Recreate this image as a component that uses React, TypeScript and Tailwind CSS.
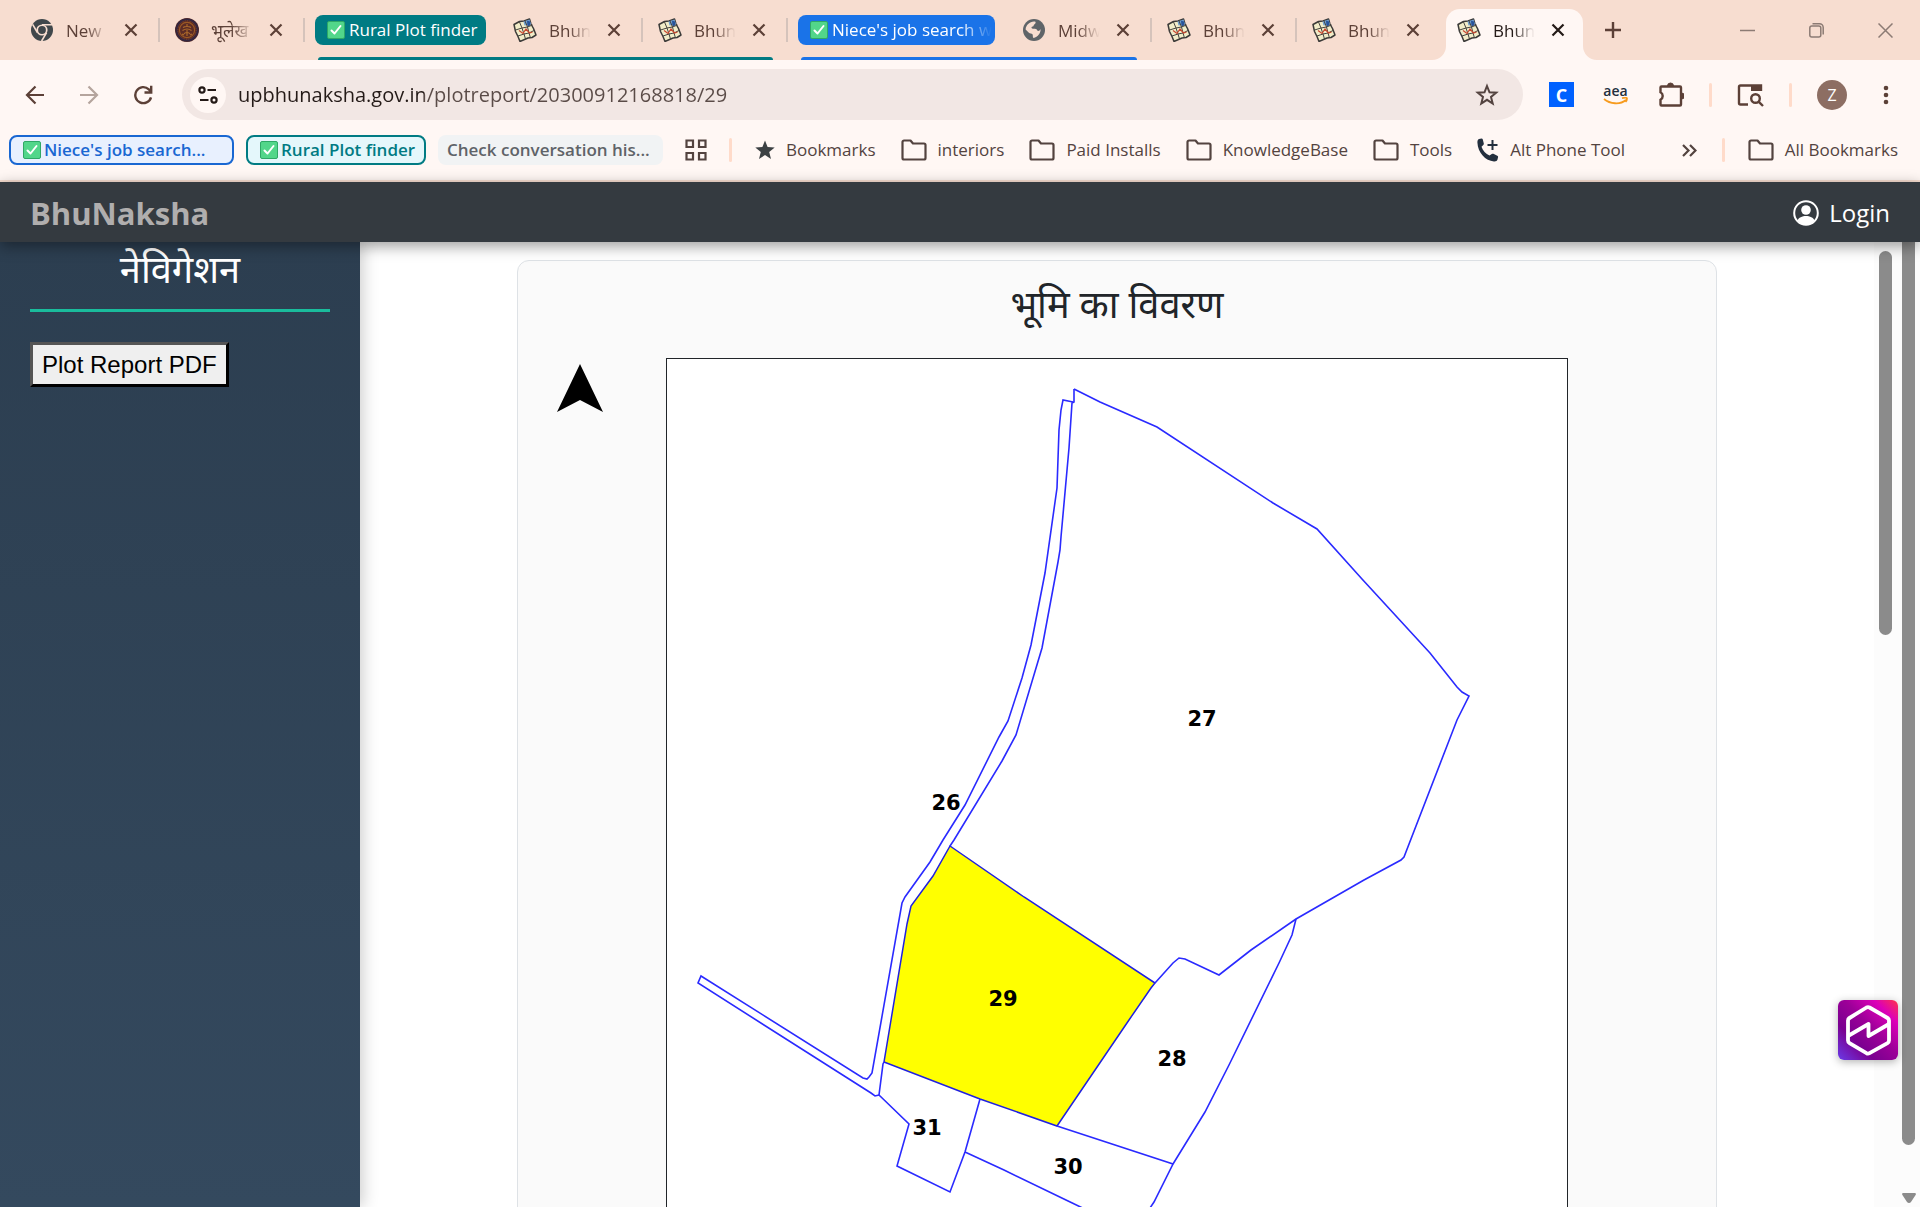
import { ReactNode } from 'react'
import clsx from 'clsx'

const ui = "font-['Open_Sans','Noto_Sans',sans-serif]"

/* ---------- icons ---------- */

const ChromeIcon = () => (
  <svg viewBox="0 0 24 24" className="h-6 w-6 shrink-0">
    <circle cx="12" cy="12" r="11" fill="#40474b" />
    <circle cx="12" cy="12" r="5.6" fill="#f7ddd0" />
    <circle cx="12" cy="12" r="3.9" fill="#40474b" />
    <path d="M12 6.8h10M7.4 14.5 2.6 6.4M16.6 14.6 11.6 23" stroke="#f7ddd0" strokeWidth="1.6" fill="none" />
  </svg>
)

const SealIcon = () => (
  <svg viewBox="0 0 24 24" className="h-6 w-6 shrink-0">
    <circle cx="12" cy="12" r="12" fill="#5b2b25" />
    <circle cx="12" cy="12" r="10.6" fill="none" stroke="#332640" strokeWidth="1.8" />
    <circle cx="12" cy="12" r="7.6" fill="none" stroke="#9c5a24" strokeWidth="1.1" />
    <path d="M12 6v3M8 9.5c2-1.4 6-1.4 8 0M7.5 12.5c3-2 6-2 9 0M9 16c1-2 5-2 6 0M12 12v6M7 16l2 1M17 16l-2 1" stroke="#b06c2a" strokeWidth="1.1" fill="none" />
    <circle cx="12" cy="12" r="9.2" fill="none" stroke="#8a4a2a" strokeWidth=".8" strokeDasharray="1 1.4" />
  </svg>
)

const MapIcon = () => (
  <svg viewBox="0 0 24 24" className="h-6 w-6 shrink-0">
    <path d="M1 6.5 6.5 3.5 11 3 16.5 1 18 6l2.5 4.5L23 17l-4 2.5-4 .5-8 3.5-2-5-2.5-5z" fill="#f1ecc8" stroke="#3b3a38" strokeWidth="1.5" strokeLinejoin="round" />
    <path d="m10.5 3.5 6-2 1.5 4.5-3.5 1-3 .5z" fill="#6f9fd0" />
    <path d="m14 2.5 3 1 .5 4-3 1z" fill="#28549a" />
    <path d="m2.5 12 6.5-2 5.5-1 5-2M5 18l6-2 5-1 5-2.5M6.5 4l2.5 6 2 6 1.5 5M12 3l2.5 6 1.5 6 1.5 5" fill="none" stroke="#46443f" strokeWidth="1" />
    <path d="m6 12.5 4 3 3-4.5 3.5 4 3-1" fill="none" stroke="#c9472f" strokeWidth="1.2" />
  </svg>
)

const GlobeIcon = () => (
  <svg viewBox="0 0 24 24" className="h-6 w-6 shrink-0">
    <circle cx="12" cy="12" r="11" fill="#5f6468" />
    <path d="M12 3.6c2.6-.2 1.6 2.2.3 2.8-1 .5-.3 1.8-1.6 2.2-1.3.3-1.8 1.4-.5 1.9 1.6.5 4.3-.2 5 1.7.6 1.7 2.8.4 3.3-1.2.6 3.5-2.6 8.4-7 8.9-1.1-.8-.3-2.6-1-3.7-.9-1.3-2.6-.3-3.6-1.5L3.6 11.4C3.9 7.3 7.5 3.9 12 3.6z" fill="#f7ddd0" />
  </svg>
)

const CheckMark = () => (
  <svg viewBox="0 0 18 18" className="h-[18px] w-[18px] shrink-0">
    <rect x=".5" y=".5" width="17" height="17" rx="1.5" fill="#52d68a" stroke="#2fa866" />
    <path d="m4.5 9.5 3 3 6-7.5" fill="none" stroke="#fff" strokeWidth="2" strokeLinecap="round" strokeLinejoin="round" />
  </svg>
)

const Cross = () => (
  <svg viewBox="0 0 14 14" className="h-[14px] w-[14px]" fill="none" stroke="currentColor" strokeWidth="2.2">
    <path d="m1.5 1.5 11 11M12.5 1.5l-11 11" />
  </svg>
)

const Folder = () => (
  <svg viewBox="0 0 26 22" className="h-[22px] w-[26px] shrink-0" fill="none" stroke="#53433f" strokeWidth="2.2" strokeLinejoin="round">
    <path d="M1.5 19V3a1.5 1.5 0 0 1 1.5-1.5h6.5L12 4.5h11A1.5 1.5 0 0 1 24.5 6v13a1.5 1.5 0 0 1-1.5 1.5H3A1.5 1.5 0 0 1 1.5 19z" />
  </svg>
)

/* ---------- tab strip ---------- */

interface TabProps {
  icon: ReactNode
  title: string
  active?: boolean
  divider?: boolean
}

function Tab({ icon, title, active, divider }: TabProps) {
  return (
    <div className="relative flex h-full w-[145px] shrink-0 items-center pl-[15px]">
      {active && (
        <div className="absolute inset-x-1 top-[9px] bottom-0 rounded-t-[14px] bg-[#fff7f4]">
          <svg viewBox="0 0 14 14" className="absolute bottom-0 -left-[14px] h-[14px] w-[14px]">
            <path d="M14 0v14H0A14 14 0 0 0 14 0z" fill="#fff7f4" />
          </svg>
          <svg viewBox="0 0 14 14" className="absolute -right-[14px] bottom-0 h-[14px] w-[14px]">
            <path d="M0 0v14h14A14 14 0 0 1 0 0z" fill="#fff7f4" />
          </svg>
        </div>
      )}
      <button
        className={clsx(
          'relative flex items-center gap-3',
          active ? 'text-[#241a17]' : 'text-[#5c4037]'
        )}
      >
        {icon}
        <span className="w-11 pt-[2px] text-left text-[17px] leading-7 whitespace-nowrap [mask-image:linear-gradient(to_right,#000_45%,transparent_95%)]">
          {title}
        </span>
      </button>
      <button
        aria-label="Close tab"
        className={clsx('relative ml-[14px]', active ? 'text-[#241a17]' : 'text-[#5c4037]')}
      >
        <Cross />
      </button>
      {divider && <div className="absolute right-0 h-6 w-[2px] bg-[#d5c3bb]" />}
    </div>
  )
}

interface TabGroupProps {
  label: string
  chip: string
  line: string
  fade?: boolean
  children: ReactNode
}

function TabGroup({ label, chip, line, fade, children }: TabGroupProps) {
  return (
    <div className="relative flex h-full items-center">
      <button
        className={clsx(
          'mr-3 ml-[10px] flex h-[30px] items-center gap-1 rounded-lg pr-1 pl-3 text-[17px] whitespace-nowrap text-white',
          chip
        )}
      >
        <CheckMark />
        <span
          className={clsx(
            'flex-1 text-left',
            fade && '[mask-image:linear-gradient(to_right,#000_80%,transparent)]'
          )}
        >
          {label}
        </span>
      </button>
      {children}
      <div className={clsx('absolute right-[15px] bottom-0 left-[13px] h-[3px] rounded-t-sm', line)} />
    </div>
  )
}

function TabStrip() {
  return (
    <div className="flex h-[60px] items-center bg-[#f7ddd0] pl-[15px]">
      <Tab icon={<ChromeIcon />} title="New" divider />
      <Tab icon={<SealIcon />} title="भूलेख" divider />
      <TabGroup label="Rural Plot finder" chip="w-[171px] bg-[#007b83]" line="bg-[#007b83]">
        <Tab icon={<MapIcon />} title="Bhun" divider />
        <Tab icon={<MapIcon />} title="Bhun" divider />
      </TabGroup>
      <TabGroup label="Niece's job search w" chip="w-[197px] bg-[#1a73e8]" line="bg-[#1a73e8]" fade>
        <Tab icon={<GlobeIcon />} title="Midw" divider />
      </TabGroup>
      <Tab icon={<MapIcon />} title="Bhun" divider />
      <Tab icon={<MapIcon />} title="Bhun" />
      <Tab icon={<MapIcon />} title="Bhun" active />
      <button aria-label="New tab" className="ml-[18px]">
        <svg viewBox="0 0 16 16" className="h-4 w-4" stroke="#5c4037" strokeWidth="2.4">
          <path d="M8 0v16M0 8h16" />
        </svg>
      </button>
      <div className="ml-auto flex items-center gap-[54px] pr-[27px] text-[#8c7b74]">
        <button aria-label="Minimize">
          <svg viewBox="0 0 15 15" className="h-[15px] w-[15px]" stroke="currentColor" strokeWidth="1.5">
            <path d="M0 7.5h15" />
          </svg>
        </button>
        <button aria-label="Restore">
          <svg viewBox="0 0 15 15" className="h-[15px] w-[15px]" fill="none" stroke="currentColor" strokeWidth="1.5">
            <rect x=".8" y="3" width="11" height="11" rx="2" />
            <path d="M3.5 .8h7a3.7 3.7 0 0 1 3.7 3.7v7" />
          </svg>
        </button>
        <button aria-label="Close">
          <svg viewBox="0 0 15 15" className="h-[15px] w-[15px]" stroke="currentColor" strokeWidth="1.5">
            <path d="m.5 .5 14 14M14.5 .5l-14 14" />
          </svg>
        </button>
      </div>
    </div>
  )
}

/* ---------- toolbar ---------- */

const Bar = () => <div className="h-6 w-[3px] shrink-0 rounded-full bg-[#ffdbca]" />

function Toolbar() {
  return (
    <div className="flex items-center pt-[9px] pr-[31px] pl-[25px]">
      <button aria-label="Back">
        <svg viewBox="0 0 20 20" className="h-5 w-5" fill="none" stroke="#5c4037" strokeWidth="2.2">
          <path d="M19 10H2M10.5 1.5 2 10l8.5 8.5" />
        </svg>
      </button>
      <button aria-label="Forward" className="ml-[34px]">
        <svg viewBox="0 0 20 20" className="h-5 w-5" fill="none" stroke="#b5a49d" strokeWidth="2.2">
          <path d="M1 10h17M9.5 1.5 18 10l-8.5 8.5" />
        </svg>
      </button>
      <button aria-label="Reload" className="ml-[34px]">
        <svg viewBox="0 0 20 20" className="h-5 w-5" fill="none" stroke="#5c4037" strokeWidth="2.4">
          <path d="M18 12.3A8 8 0 1 1 15.8 4.3L18 6.5M18.2 .8v6.7h-6.7" />
        </svg>
      </button>
      <div className="ml-[29px] flex h-[51px] flex-1 items-center rounded-full bg-[#f2e7e4] pr-6 pl-2">
        <button aria-label="View site information" className="flex h-9 w-9 items-center justify-center rounded-full bg-[#fff7f4]">
          <svg viewBox="0 0 20 18" className="h-[18px] w-5" fill="none" stroke="#241a17" strokeWidth="2.2">
            <circle cx="4" cy="4" r="2.6" />
            <path d="M9.5 4H18M2 14h8.5" />
            <circle cx="16" cy="14" r="2.6" />
          </svg>
        </button>
        <input
          aria-label="Address and search bar"
          defaultValue="upbhunaksha.gov.in/plotreport/20300912168818/29"
          className="ml-3 h-9 min-w-0 flex-1 bg-[linear-gradient(to_right,#241a17_186px,#5a4b47_186px)] bg-clip-text text-xl text-transparent outline-none"
        />
        <button aria-label="Bookmark this tab">
          <svg viewBox="0 0 24 24" className="h-6 w-6" fill="none" stroke="#53433f" strokeWidth="2">
            <path d="m12 3 2.5 6.3 6.7.4-5.2 4.2 1.7 6.6L12 16.8l-5.7 3.7L8 13.9 2.8 9.7l6.7-.4z" />
          </svg>
        </button>
      </div>
      <button aria-label="Extension C" className="ml-[26px] flex h-[25px] w-[25px] items-center justify-center bg-[#0061ff] text-lg font-bold text-white">
        C
      </button>
      <button aria-label="aea" className="ml-[28px] flex w-[27px] flex-col items-center">
        <span className="text-sm leading-3 font-semibold text-[#232f3e]">aea</span>
        <svg viewBox="0 0 27 8" className="h-2 w-[27px]" fill="none" stroke="#f79b1e" strokeWidth="1.8">
          <path d="M2 2c6 5 16 6 22 1M20 1.2c3-.8 5-.6 5 .3s-.6 2.5-1.5 3.5" />
        </svg>
      </button>
      <button aria-label="Extensions" className="ml-[29px]">
        <svg viewBox="0 0 26 26" className="h-[26px] w-[26px]">
          <path d="M4 4.5h18a1 1 0 0 1 1 1v17a1 1 0 0 1-1 1H3.5a1 1 0 0 1-1-1v-4.8a4.2 4.2 0 0 0 0-7.4V5.5a1 1 0 0 1 1-1z" fill="none" stroke="#5c4037" strokeWidth="2.4" />
          <path d="M9.5 4a3 3 0 0 1 6 0zM23.5 11a3 3 0 0 1 0 6z" fill="#5c4037" stroke="#5c4037" />
        </svg>
      </button>
      <div className="ml-[25px] flex items-center gap-[25px]">
        <Bar />
        <button aria-label="Search tabs">
          <svg viewBox="0 0 27 24" className="h-6 w-[27px]" fill="none" stroke="#5c4037" strokeWidth="2.4">
            <path d="M11 21.5H3.5a1.5 1.5 0 0 1-1.5-1.5V4a1.5 1.5 0 0 1 1.5-1.5H24V8" />
            <path d="M14 2h11v6H14z" fill="#5c4037" stroke="none" />
            <circle cx="18.5" cy="15.5" r="4.3" />
            <path d="m21.8 18.8 4.2 4.2" />
          </svg>
        </button>
        <Bar />
        <button aria-label="Profile" className="flex h-[30px] w-[30px] items-center justify-center rounded-full bg-[#8d6e63] text-base text-white">
          Z
        </button>
      </div>
      <button aria-label="Menu" className="ml-[36px]">
        <svg viewBox="0 0 6 20" className="h-5 w-[6px]" fill="#5c4037">
          <circle cx="3" cy="3" r="2.3" />
          <circle cx="3" cy="10" r="2.3" />
          <circle cx="3" cy="17" r="2.3" />
        </svg>
      </button>
    </div>
  )
}

/* ---------- bookmarks bar ---------- */

function Bookmark({ icon, label }: { icon: ReactNode; label: string }) {
  return (
    <a href="#" className="flex items-center gap-[11px] whitespace-nowrap">
      {icon}
      {label}
    </a>
  )
}

const folders = ['interiors', 'Paid Installs', 'KnowledgeBase', 'Tools']

function BookmarksBar() {
  const chip = 'flex h-[30px] shrink-0 items-center gap-[3px] rounded-lg whitespace-nowrap font-semibold'
  return (
    <div className="flex h-[60px] items-center pr-[22px] pl-[9px] text-[17px] text-[#53433f]">
      <button className={clsx(chip, 'w-[225px] border-2 border-[#1967d2] bg-[#e8f0fe] pl-3 text-[#1967d2]')}>
        <CheckMark />
        Niece's job search...
      </button>
      <button className={clsx(chip, 'ml-3 w-[180px] border-2 border-[#007b83] bg-[#e4f7fb] pl-3 text-[#007b83]')}>
        <CheckMark />
        Rural Plot finder
      </button>
      <button className={clsx(chip, 'ml-3 w-[225px] bg-[#f1f3f4] pl-[9px] text-[#5f6368]')}>
        Check conversation his...
      </button>
      <button aria-label="Tab groups" className="ml-[22px]">
        <svg viewBox="0 0 22 22" className="h-[22px] w-[22px]" fill="none" stroke="#53433f" strokeWidth="2.2">
          <path d="M1.5 1.5h6.5v6.5H1.5zM14 1.5h6.5v6.5H14zM1.5 14h6.5v6.5H1.5zM14 14h6.5v6.5H14z" />
        </svg>
      </button>
      <div className="mr-[23px] ml-[22px]">
        <Bar />
      </div>
      <div className="flex items-center gap-[25px]">
        <Bookmark
          icon={
            <svg viewBox="0 0 20 20" className="h-5 w-5" fill="#3c4043">
              <path d="m10 .5 2.6 6.6 7.1.5-5.5 4.5 1.8 6.9-6-3.9L4 19l1.8-6.9L.3 7.6l7.1-.5z" />
            </svg>
          }
          label="Bookmarks"
        />
        {folders.map((name) => (
          <Bookmark key={name} icon={<Folder />} label={name} />
        ))}
        <Bookmark
          icon={
            <svg viewBox="0 0 22 24" className="h-6 w-[22px]" fill="#232f3e">
              <path d="M2 1 4.5.5c.7 0 1.1.4 1.3 1l1 4c.1.6 0 1.1-.5 1.5L4.500 8.700c1.200 4 4.300 7.300 8 8.800l2.300-1.500c.5-.4 1-.5 1.600-.2l3.900 1.900c.6.3.9.8.8 1.400l-.6 2.400c-.3 1.300-1.600 2-3.500 1.900C8.500 22.900.8 14.800.4 4.500.4 2.700.8 1.400 2 1z" />
              <path d="M15.5 2v10M10.500 7h10" stroke="#232f3e" strokeWidth="2" />
            </svg>
          }
          label="Alt Phone Tool"
        />
      </div>
      <button aria-label="More bookmarks" className="ml-auto">
        <svg viewBox="0 0 15 13" className="h-[13px] w-[15px]" fill="none" stroke="#53433f" strokeWidth="2.2">
          <path d="m1 1 5.5 5.5L1 12M8 1l5.5 5.5L8 12" />
        </svg>
      </button>
      <div className="mr-[23px] ml-[25px]">
        <Bar />
      </div>
      <Bookmark icon={<Folder />} label="All Bookmarks" />
    </div>
  )
}

/* ---------- plot map ---------- */

const plotLines = [
  // 27
  '1074,389 1100,402 1157,427 1273,503 1317,529 1362,579 1430,653 1457,687 1462,692 1469,696 1457,720 1404,857 1401,860 1364,880 1296,919 1251,950 1219,975 1185,959 1179,958 1173,963 1155,983',
  // track, east side
  '1074,389 1074,402 1072,403 1069,448 1061,537 1060,550 1058,562 1042,648 1016,735 1002,761 954,840 950,846',
  '884,1062 883,1064 879,1095',
  // track, west side
  '1073,402 1063,400 1061,410 1059,430 1057,488 1045,573 1031,645 1022,678 1008,721 999,737 965,805 943,840 930,862 905,897 902,903 872,1073 869,1077 867,1079 863,1078 701,976 698,983 871,1093 875,1096 879,1095',
  // 31
  '879,1095 909,1124 897,1166 950,1192 965,1152 980,1099',
  // 30
  '965,1152 1004,1170 1066,1200 1120,1226 1150,1208 1154,1202 1173,1164 1057,1126',
  // 28
  '1296,919 1292,935 1279,963 1229,1065 1205,1112 1173,1164',
]

const selectedPlot =
  '950,846 1024,897 1155,983 1151,988 1129,1020 1057,1126 980,1099 884,1062 907,924 911,906 933,876'

const plotLabels = [
  { no: '26', x: 946, y: 810 },
  { no: '27', x: 1202, y: 726 },
  { no: '29', x: 1003, y: 1006 },
  { no: '28', x: 1172, y: 1066 },
  { no: '31', x: 927, y: 1135 },
  { no: '30', x: 1068, y: 1174 },
]

function PlotMap() {
  return (
    <svg viewBox="667 359 900 900" className="block w-full">
      <polygon points={selectedPlot} fill="#ffff00" stroke="#2020e0" strokeWidth="1.5" />
      {plotLines.map((points) => (
        <polyline key={points} points={points} fill="none" stroke="#2a2aff" strokeWidth="1.6" />
      ))}
      {plotLabels.map((p) => (
        <text
          key={p.no}
          x={p.x}
          y={p.y}
          textAnchor="middle"
          className="fill-black font-['DejaVu_Sans',sans-serif] text-[21px] font-bold"
        >
          {p.no}
        </text>
      ))}
    </svg>
  )
}

/* ---------- page ---------- */

function SiteHeader() {
  return (
    <header className="relative z-10 flex h-[60px] shrink-0 items-center justify-between bg-[#343a40] px-[30px] pt-[2px] shadow-[0_4px_14px_rgba(0,0,0,0.4)]">
      <span className="text-[31px] font-bold text-[#b0aeae]">BhuNaksha</span>
      <a href="#" className="flex items-center gap-[10px] text-2xl text-white">
        <svg viewBox="0 0 26 26" className="h-[26px] w-[26px]">
          <circle cx="13" cy="13" r="11.8" fill="none" stroke="#fff" strokeWidth="2" />
          <circle cx="13" cy="10" r="4.8" fill="#fff" />
          <path d="M4.5 20.5c2-6 15-6 17 0A12 12 0 0 1 13 25a12 12 0 0 1-8.5-4.5z" fill="#fff" />
        </svg>
        Login
      </a>
    </header>
  )
}

function Sidebar() {
  return (
    <aside className="w-[360px] shrink-0 bg-linear-to-b from-[#2c3e50] to-[#34495e] px-[30px] shadow-[3px_0_15px_rgba(0,0,0,0.2)]">
      <h2 className="border-b-3 border-[#1abc9c] pt-[2px] pb-[17px] text-center text-[38px] leading-[48px] text-white">
        नेविगेशन
      </h2>
      <button className="mt-[30px] h-[45px] border-3 border-t-[#555] border-r-black border-b-black border-l-[#555] bg-[#efefef] px-[9px] font-['Liberation_Sans',sans-serif] text-2xl leading-8 text-black">
        Plot Report PDF
      </button>
    </aside>
  )
}

function Scrollbars() {
  return (
    <div className="flex shrink-0 bg-[#fcfcfc]">
      <div className="w-[22px] pt-[9px] pl-[5px]">
        <div className="h-[384px] w-[13px] rounded-full bg-[#8b8b8b]" />
      </div>
      <div className="flex w-6 flex-col items-center pb-1 pl-[1px]">
        <div className="h-[903px] w-[13px] rounded-b-full bg-[#8b8b8b]" />
        <svg viewBox="0 0 14 10" className="mt-auto h-[10px] w-[14px]" fill="#8b8b8b">
          <path d="M1.5 0h11c1.3 0 1.8 1 1.1 2L9 9c-1 1.3-3 1.3-4 0L.4 2C-.3 1 .2 0 1.5 0z" />
        </svg>
      </div>
    </div>
  )
}

export default function App() {
  return (
    <div className={clsx('relative flex h-screen flex-col overflow-hidden bg-white', ui)}>
      <TabStrip />
      <div className="h-[122px] shrink-0 border-b-2 border-[#f7ddd0] bg-[#fff7f4]">
        <Toolbar />
        <BookmarksBar />
      </div>
      <SiteHeader />
      <div className="flex min-h-0 flex-1">
        <Sidebar />
        <main className="min-w-0 flex-1 overflow-hidden px-6 pt-[18px]">
          <section className="relative mx-auto max-w-[1200px] rounded-xl border border-[#dee2e6] bg-[#fafafa] pt-4">
            <h1 className="text-center text-[38px] leading-[52px] text-[#212529]">भूमि का विवरण</h1>
            <svg viewBox="0 0 46 48" className="absolute top-[103px] left-[39px] h-12 w-[46px]">
              <path d="M23 0 46 48 23 36 0 48z" fill="#000" />
            </svg>
            <div className="mx-auto mt-[29px] w-[902px] max-w-full border border-[#212529] bg-white">
              <PlotMap />
            </div>
          </section>
        </main>
        <Scrollbars />
      </div>
      <button aria-label="Open assistant" className="absolute right-[22px] bottom-[147px] z-20 rounded-md shadow-[0_2px_8px_rgba(0,0,0,0.3)]">
        <svg viewBox="0 0 60 60" className="block h-[60px] w-[60px]">
          <defs>
            <linearGradient id="badge" x1="0" y1="1" x2="1" y2="0">
              <stop offset="0" stopColor="#6a3be8" />
              <stop offset=".3" stopColor="#7a0090" />
              <stop offset=".55" stopColor="#9c0098" />
              <stop offset=".8" stopColor="#dc00b8" />
              <stop offset="1" stopColor="#ff3348" />
            </linearGradient>
          </defs>
          <rect width="60" height="60" rx="6" fill="url(#badge)" />
          <path d="M28.5 7.5q1.5-.8 3 0l18 10.5q1.5.9 1.5 2.6v20q0 1.7-1.5 2.6l-18 10q-1.5.8-3 0l-17-10Q10 42.3 10 40.600v-20q0-1.700 1.500-2.600z" fill="none" stroke="#fff" strokeWidth="3.8" strokeLinejoin="round" />
          <path d="M10 36 30.5 24v12L51 24" fill="none" stroke="#fff" strokeWidth="3.8" strokeLinejoin="round" />
        </svg>
      </button>
    </div>
  )
}
